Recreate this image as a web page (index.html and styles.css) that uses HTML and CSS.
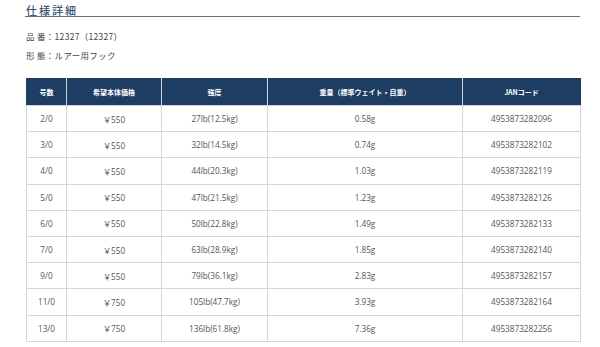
FILE: index.html
```html
<!DOCTYPE html>
<html lang="ja">
<head>
<meta charset="utf-8">
<link rel="stylesheet" href="styles.css">
</head>
<body>
<div class="page">
  <h2 class="title">仕様詳細</h2>
  <div class="info">
    <p>品 番：12327（12327）</p>
    <p>形 態：ルアー用フック</p>
  </div>
  <table class="spec">
    <colgroup>
      <col class="c1"><col class="c2"><col class="c3"><col class="c4"><col class="c5">
    </colgroup>
    <thead>
      <tr><th>号数</th><th>希望本体価格</th><th>強度</th><th>重量（標準ウェイト・自重）</th><th>JANコード</th></tr>
    </thead>
    <tbody>
      <tr><td>2/0</td><td>￥550</td><td>27lb(12.5kg)</td><td>0.58g</td><td>4953873282096</td></tr>
      <tr><td>3/0</td><td>￥550</td><td>32lb(14.5kg)</td><td>0.74g</td><td>4953873282102</td></tr>
      <tr><td>4/0</td><td>￥550</td><td>44lb(20.3kg)</td><td>1.03g</td><td>4953873282119</td></tr>
      <tr><td>5/0</td><td>￥550</td><td>47lb(21.5kg)</td><td>1.23g</td><td>4953873282126</td></tr>
      <tr><td>6/0</td><td>￥550</td><td>50lb(22.8kg)</td><td>1.49g</td><td>4953873282133</td></tr>
      <tr><td>7/0</td><td>￥550</td><td>63lb(28.9kg)</td><td>1.85g</td><td>4953873282140</td></tr>
      <tr><td>9/0</td><td>￥550</td><td>79lb(36.1kg)</td><td>2.83g</td><td>4953873282157</td></tr>
      <tr><td>11/0</td><td>￥750</td><td>105lb(47.7kg)</td><td>3.93g</td><td>4953873282164</td></tr>
      <tr><td>13/0</td><td>￥750</td><td>136lb(61.8kg)</td><td>7.36g</td><td>4953873282256</td></tr>
    </tbody>
  </table>
</div>
</body>
</html>
```

FILE: styles.css
```css
html, body {
  margin: 0;
  padding: 0;
  background: #fff;
}
.page {
  padding: 4px 20px 0 26px;
  font-family: "Noto Sans CJK JP", "Open Sans", sans-serif;
  color: #444;
}
.title {
  margin: 0 0 0 -1px;
  font-size: 11px;
  font-weight: 500;
  letter-spacing: 2px;
  line-height: 12px;
  color: #3b5570;
  padding: 0 0 0 1px;
  border-bottom: 1px solid #5a7386;
}
.info {
  padding-top: 10px;
}
.info p {
  margin: 0;
  font-size: 8.5px;
  line-height: 19px;
  color: #444;
  letter-spacing: 0.3px;
}
.spec {
  margin-top: 13px;
  width: 554px;
  border-collapse: collapse;
  table-layout: fixed;
  font-size: 8.2px;
}
.c1 { width: 40px; }
.c2 { width: 95px; }
.c3 { width: 106px; }
.c4 { width: 195px; }
.c5 { width: 118px; }
.spec th {
  background: #1d3d63;
  color: #fff;
  font-weight: 700;
  height: 26px;
  padding: 0;
  border: 1px solid #d0d6dc;
  border-top-color: #1d3d63;
  font-size: 7px;
}
.spec th:first-child { border-left-color: #1d3d63; }
.spec th:last-child { border-right-color: #1d3d63; }
.spec td {
  height: 25.2px;
  padding: 0;
  text-align: center;
  border: 1px solid #d6d6d6;
  color: #555;
  font-family: "Open Sans", "Noto Sans CJK JP", sans-serif;
}
```
